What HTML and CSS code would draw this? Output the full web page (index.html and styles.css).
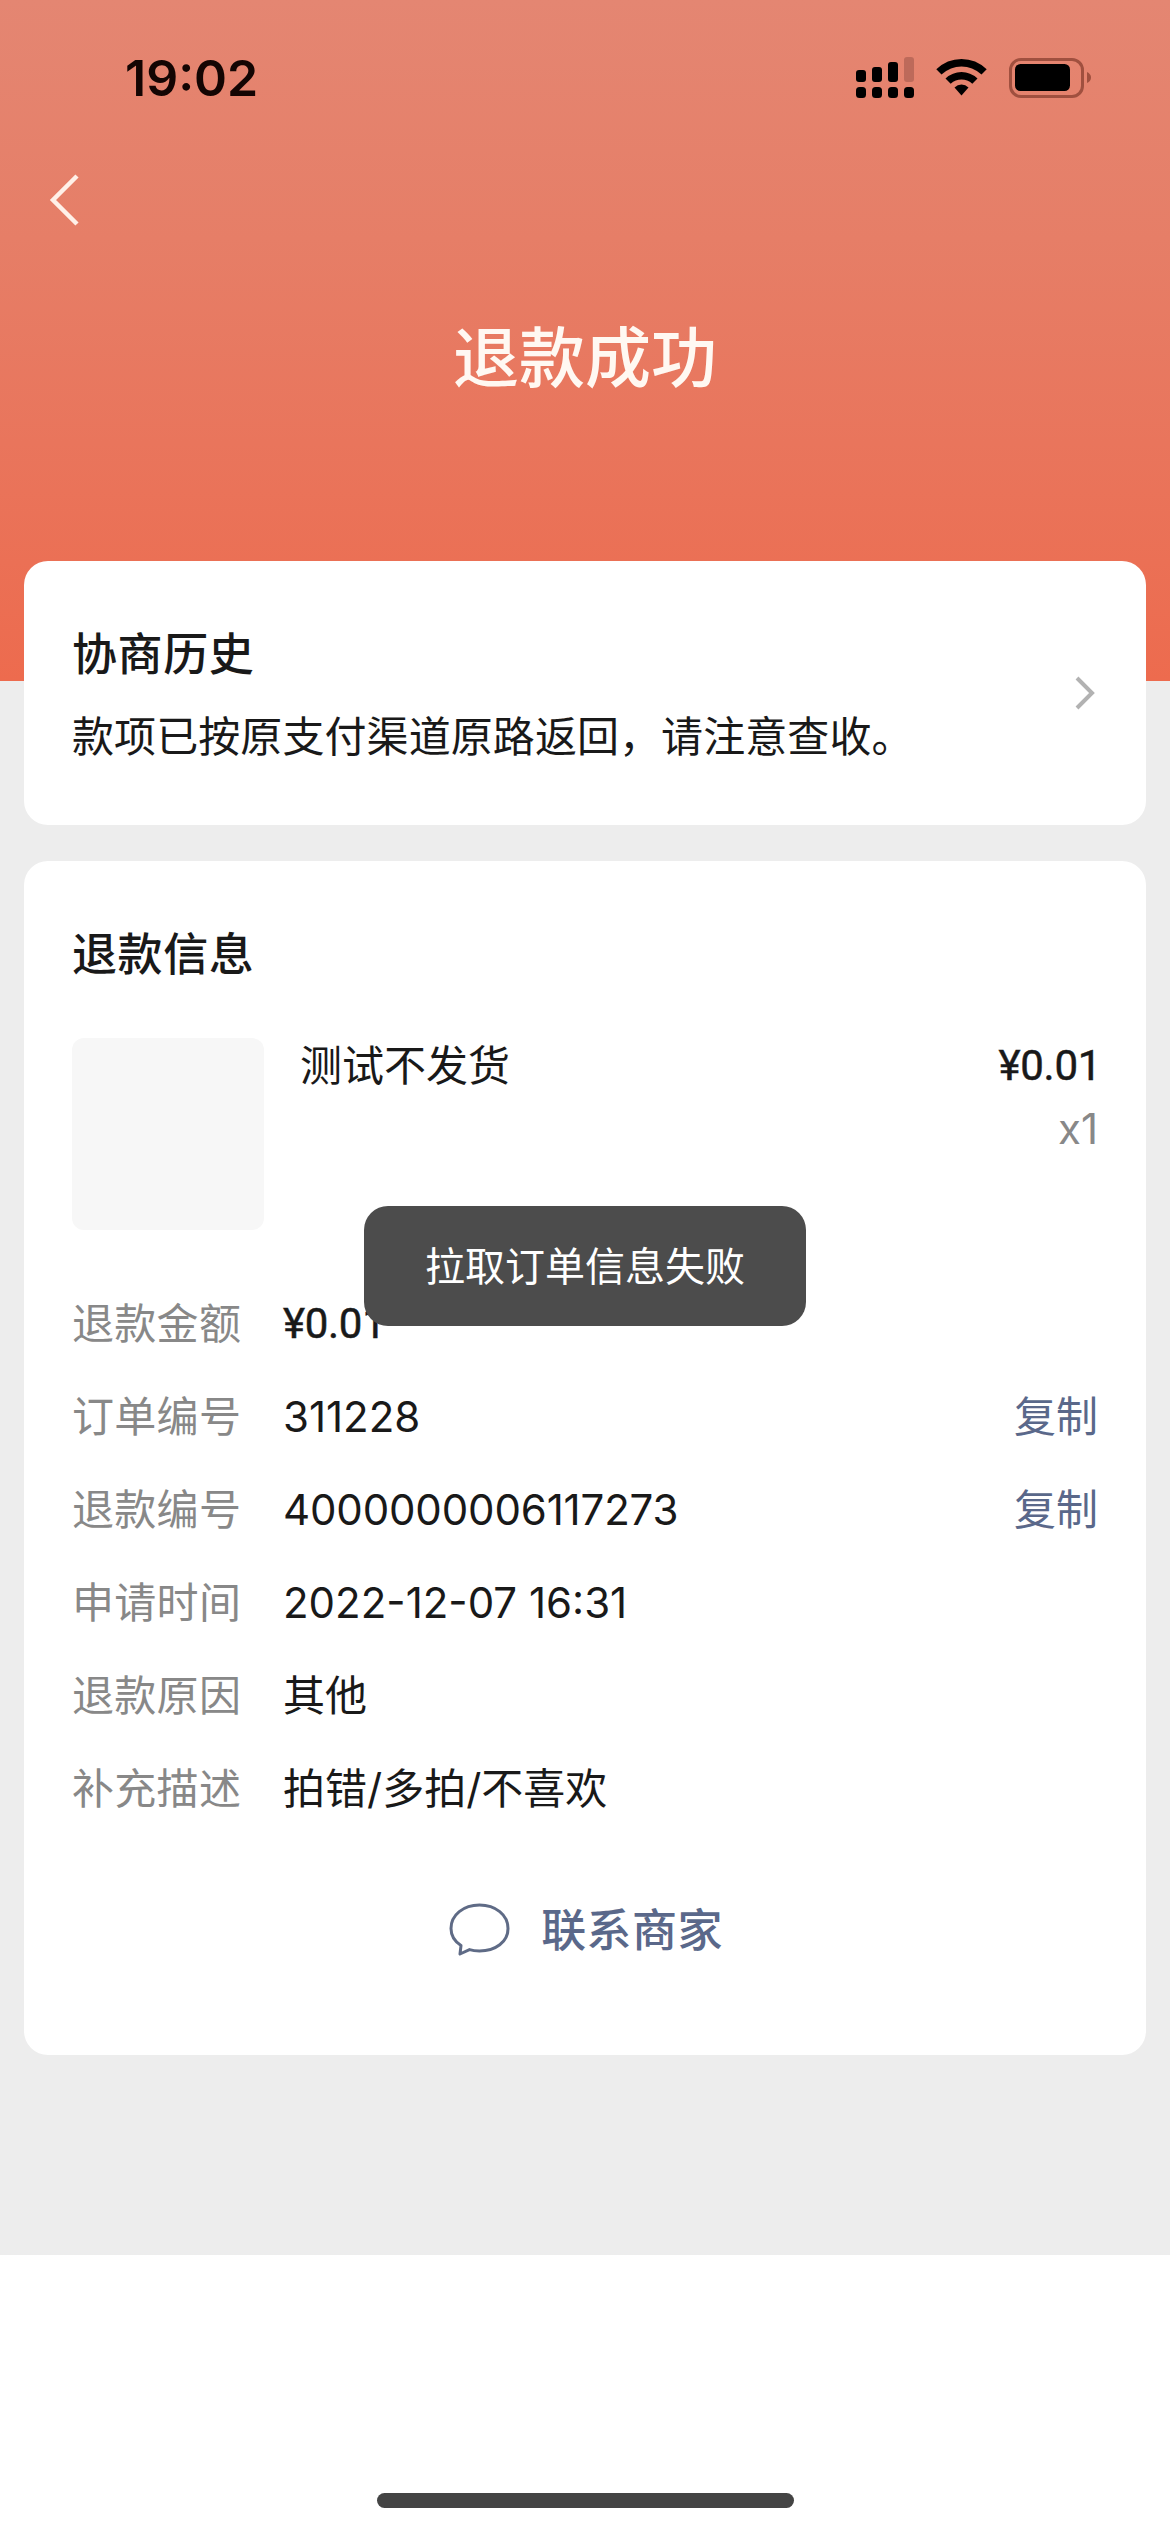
FILE: index.html
```html
<!DOCTYPE html>
<html lang="zh-CN">
<head>
<meta charset="utf-8">
<title>退款成功</title>
<link rel="stylesheet" href="styles.css">
</head>
<body>
<div class="page">
  <header class="hero">
    <div class="status">
      <span class="time">19:02</span>
      <svg class="status-icons" viewBox="0 0 240 60" width="240" height="60">
        <g>
          <rect x="6" y="25" width="10" height="12" rx="3"/>
          <rect x="22" y="22" width="10" height="15" rx="3"/>
          <rect x="38" y="17" width="10" height="20" rx="3"/>
          <rect x="54" y="12" width="10" height="25" rx="3" fill="#bd6a5a"/>
          <rect x="6" y="42" width="10" height="11" rx="3.5"/>
          <rect x="22" y="42" width="10" height="11" rx="3.5"/>
          <rect x="38" y="42" width="10" height="11" rx="3.5"/>
          <rect x="54" y="42" width="10" height="11" rx="3.5"/>
        </g>
        <path d="M86.300 24.300Q97 14 111.500 14T136.700 24.300L131.500 29.500Q122.500 21.500 111.500 21.500T91.500 29.500Z"/>
        <path d="M95.500 33.500Q102.500 27 111.500 27T127.500 33.500L122.300 38.700Q117.500 34.500 111.500 34.500T100.700 38.700Z"/>
        <path d="M104.500 42.500Q107.500 39.500 111.500 39.500T118.500 42.500L111.500 50.500Z"/>
        <rect x="160.500" y="14.500" width="72" height="37" rx="10.500" fill="none" stroke="#a0503f" stroke-width="3"/>
        <rect x="165" y="19" width="55" height="27" rx="5.500"/>
        <path d="M237 27Q241 29 241 32.500T237 38Z" fill="#a0503f"/>
      </svg>
    </div>
    <nav class="nav">
      <svg viewBox="0 0 36 60" width="36" height="60"><path d="M32 6 8 30 32 54" fill="none" stroke="#fff0e8" stroke-width="4.500"/></svg>
    </nav>
    <h1 class="title">退款成功</h1>
  </header>

  <main class="content">
    <section class="card history">
      <div>
        <h2 class="card-title">协商历史</h2>
        <p class="history-text">款项已按原支付渠道原路返回，请注意查收。</p>
      </div>
      <svg class="chevron" viewBox="0 0 24 36" width="24" height="36"><path d="M3 3 18 18 3 33" fill="none" stroke="#b2b2b2" stroke-width="4"/></svg>
    </section>

    <section class="card info">
      <h2 class="card-title">退款信息</h2>
      <div class="product">
        <div class="thumb"></div>
        <div class="name">测试不发货</div>
        <div class="price-col">
          <div class="price">¥0.01</div>
          <div class="count">x1</div>
        </div>
      </div>
      <dl class="rows">
        <div class="row"><dt>退款金额</dt><dd class="price">¥0.01</dd></div>
        <div class="row"><dt>订单编号</dt><dd>311228</dd><a class="copy">复制</a></div>
        <div class="row"><dt>退款编号</dt><dd class="long">4000000006117273</dd><a class="copy">复制</a></div>
        <div class="row"><dt>申请时间</dt><dd>2022-12-07 16:31</dd></div>
        <div class="row"><dt>退款原因</dt><dd>其他</dd></div>
        <div class="row"><dt>补充描述</dt><dd>拍错/多拍/不喜欢</dd></div>
      </dl>
      <a class="contact">
        <svg viewBox="0 0 64 60" width="64" height="60"><path d="M14 45.500C7 41 4 35 4 28.500 4 15 16.500 5 32.500 5S61 15 61 28.500 48.500 51 32.500 51C29 51 25.500 50.600 22.500 49.600L13 54Z" fill="none" stroke="#5f6b86" stroke-width="3" stroke-linejoin="round"/></svg>
        <span>联系商家</span>
      </a>
    </section>
  </main>
  <div class="toast">拉取订单信息失败</div>
  <div class="home-bar"></div>
</div>
</body>
</html>
```
FILE: styles.css
```css
* { box-sizing: border-box; margin: 0; padding: 0; }
body {
  background: #fff;
  color: #191919;
  font-family: Inter, "Noto Sans CJK SC", sans-serif;
  font-size: 42px;
  line-height: 60px;
}
svg { display: block; }
.page { position: relative; width: 1170px; height: 2532px; overflow: hidden; }
.hero {
  height: 681px;
  background: linear-gradient(#e48672 0%, #e67e67 35%, #e9755c 65%, #ed6b4e 100%);
}
.status {
  height: 150px;
  padding: 48px 78px 0 125px;
  display: flex;
  justify-content: space-between;
}
.time { font-size: 50px; font-weight: 600; color: #140503; }
.status-icons { margin-right: 2px; margin-top: -3px; overflow: visible; }
.nav { height: 100px; padding: 20px 0 0 45px; }
.title {
  height: 216px;
  line-height: 216px;
  text-align: center;
  font-size: 66px;
  font-weight: 500;
  color: #fff8f2;
}
.content {
  height: 1694px;
  margin-top: -120px;
  padding: 0 24px;
  display: flex;
  flex-direction: column;
  gap: 36px;
  background: linear-gradient(transparent 120px, #ededed 120px);
}
.card { background: #fff; border-radius: 24px; padding: 0 48px; }
.card-title { font-size: 45px; font-weight: 500; line-height: 64px; letter-spacing: 0.6px; }
.history {
  height: 264px;
  padding-top: 62px;
  display: flex;
  justify-content: space-between;
}
.history-text { margin-top: 20px; letter-spacing: 0.08px; }
.chevron { margin-top: 52px; }
.info { height: 1194px; padding-top: 62px; }
.product { display: flex; margin-top: 51px; height: 192px; }
.thumb { width: 192px; height: 192px; border-radius: 12px; background: #f7f7f7; margin-right: 36px; }
.name { flex: 1; margin-top: -2px; }
.price-col { text-align: right; margin-top: -2px; }
.price { font-family: Roboto, "Noto Sans CJK SC", sans-serif; letter-spacing: -0.3px; -webkit-text-stroke: 0.5px #191919; }
.price-col .price { margin-right: -3px; }
.count { color: #888; margin-top: 3px; }
.rows { margin-top: 64px; }
.row { display: flex; height: 60px; margin-bottom: 33px; }
.row dt { width: 211px; color: #888; letter-spacing: 0.3px; }
.row dd { flex: 1; }
.row .long { letter-spacing: -0.15px; }
.copy { color: #5a688a; }
.contact {
  display: flex;
  justify-content: center;
  align-items: center;
  gap: 30px;
  height: 60px;
  margin-top: 81px;
  color: #5a688a;
  font-size: 45px;
  font-weight: 500;
}
.contact span { position: relative; top: 1px; letter-spacing: 0.4px; }
.toast {
  position: absolute;
  left: 364px;
  top: 1206px;
  width: 442px;
  height: 120px;
  border-radius: 24px;
  background: #4c4c4c;
  color: #fff;
  font-size: 40px;
  line-height: 121px;
  text-align: center;
}
.home-bar {
  width: 417px;
  height: 15px;
  margin: 238px auto 0;
  border-radius: 8px;
  background: #444;
}
```
